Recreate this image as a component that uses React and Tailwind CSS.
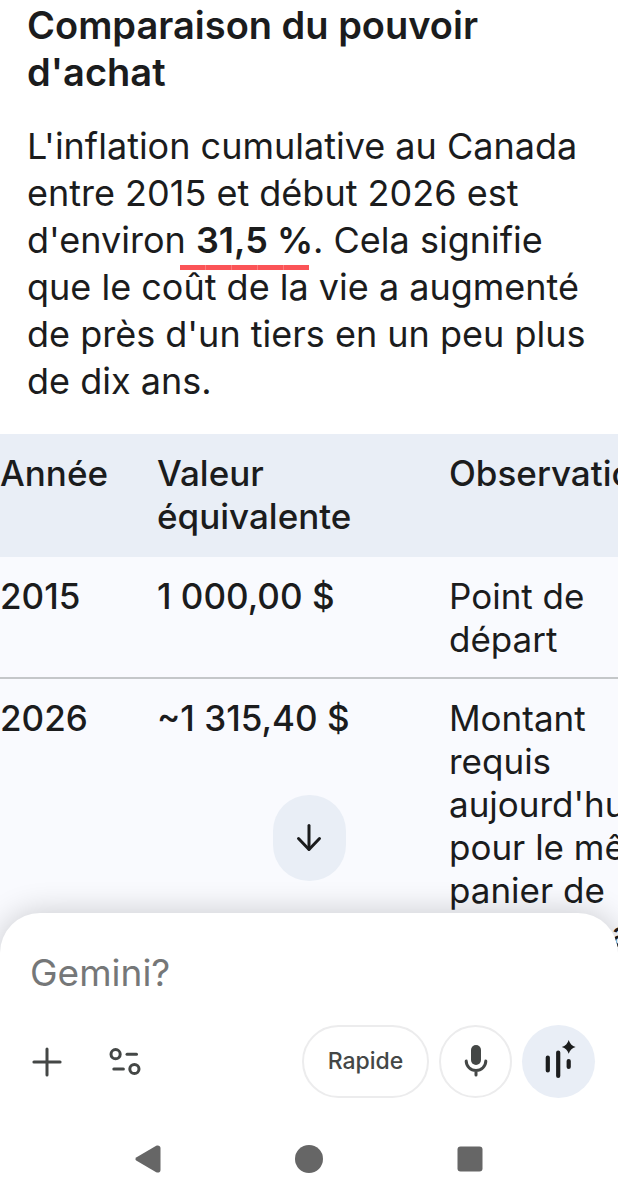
const ROWS = [
  { year: "2015", value: "1\u00a0000,00\u00a0$", note: "Point de départ" },
  {
    year: "2026",
    value: "~1\u00a0315,40\u00a0$",
    note: "Montant requis aujourd'hui pour le même panier de consommation.",
  },
];

export default function App() {
  return (
    <div className="relative h-screen overflow-hidden bg-white font-['Inter',sans-serif] text-[#1b1c1d]">
      <main>
        <Answer />
        <ValueTable />
      </main>

      <div className="absolute inset-x-0 bottom-0 flex flex-col items-center gap-8">
        <button
          aria-label="Aller en bas"
          className="flex h-[86px] w-[73px] items-center justify-center rounded-[36px] bg-[#e9eef6]"
        >
          <IconArrowDown />
        </button>
        <footer className="w-full rounded-t-[40px] bg-white shadow-[0_0_32px_rgba(0,0,0,0.2)]">
          <Composer />
          <SystemNav />
        </footer>
      </div>
    </div>
  );
}

function Answer() {
  return (
    <article className="px-[27px] pt-[2px] text-[36px] leading-[47px]">
      <h2 className="text-[38px] leading-[47px] font-semibold">
        Comparaison du pouvoir d'achat
      </h2>
      <p className="-mr-4 mt-[27px]">
        L'inflation cumulative au Canada
        <br />
        entre 2015 et début 2026 est
        <br />
        d'environ{" "}
        <strong className="relative font-semibold">
          31,5&nbsp;%
          <Underline />
        </strong>
        . Cela signifie
        <br />
        que le coût de la vie a augmenté
        <br />
        de près d'un tiers en un peu plus
        <br />
        de dix ans.
      </p>
    </article>
  );
}

function Underline() {
  return (
    <span className="absolute right-1 -bottom-2 -left-4 flex h-[5px] gap-px bg-[#fd7a7c]">
      {[0, 1, 2, 3, 4].map((i) => (
        <span key={i} className="flex-1 bg-[#fb5457]" />
      ))}
    </span>
  );
}

function ValueTable() {
  return (
    <table className="mt-[29px] w-[720px] table-fixed bg-[#f9fafe] text-left align-top text-[35px] leading-[43px]">
      <colgroup>
        <col className="w-[157px]" />
        <col className="w-[292px]" />
        <col />
      </colgroup>
      <thead className="bg-[#e9eef6]">
        <tr className="align-top">
          <th className="pt-[18px] pb-[19px] font-medium">Année</th>
          <th className="pt-[18px] pr-12 pb-[19px] font-medium">
            Valeur équivalente
          </th>
          <th className="pt-[18px] pb-[19px] font-medium">Observation</th>
        </tr>
      </thead>
      <tbody>
        {ROWS.map((row) => (
          <tr
            key={row.year}
            className="border-b-2 border-[#c4c7c9] align-top last:border-b-0"
          >
            <th className="pt-[18px] pb-4 font-medium">{row.year}</th>
            <td className="pt-[18px] pb-4 font-medium">{row.value}</td>
            <td className="pt-[18px] pr-9 pb-4">{row.note}</td>
          </tr>
        ))}
      </tbody>
    </table>
  );
}

function Composer() {
  return (
    <form className="pt-9">
      <input
        type="text"
        aria-label="Demander à Gemini"
        placeholder="Gemini?"
        className="block h-12 w-full px-[30px] text-[37px] outline-none placeholder:text-[#757778]"
      />
      <div className="flex items-center gap-[10px] pt-7 pr-[23px] pl-[28px] text-[#444746]">
        <button type="button" aria-label="Ajouter" className="p-1">
          <IconPlus />
        </button>
        <button type="button" aria-label="Outils" className="ml-7 p-1">
          <IconTune />
        </button>
        <button
          type="button"
          className="ml-auto h-[73px] w-[127px] rounded-full border-2 border-[#ececed] text-[23px] font-medium"
        >
          Rapide
        </button>
        <button
          type="button"
          aria-label="Micro"
          className="flex size-[73px] items-center justify-center rounded-full border-2 border-[#ececed]"
        >
          <IconMic />
        </button>
        <button
          type="button"
          aria-label="Gemini Live"
          className="flex size-[73px] items-center justify-center rounded-full bg-[#e9eef6] text-[#1b1c1d]"
        >
          <IconLive />
        </button>
      </div>
    </form>
  );
}

function SystemNav() {
  return (
    <nav className="flex justify-center gap-[121px] pt-[41px] pb-5 text-[#666]">
      <button aria-label="Retour" className="size-10">
        <svg viewBox="0 0 40 40" fill="currentColor" className="size-10">
          <path d="M8.6 18.2 28.2 6.8C30 5.8 32.5 6.6 32.5 9V31C32.5 33.4 30 34.2 28.2 33.2L8.6 21.8Q6.2 20 8.6 18.2Z" />
        </svg>
      </button>
      <button aria-label="Accueil" className="size-10">
        <svg viewBox="0 0 40 40" fill="currentColor" className="size-10">
          <circle cx="20" cy="20" r="14" />
        </svg>
      </button>
      <button aria-label="Applications récentes" className="size-10">
        <svg viewBox="0 0 40 40" fill="currentColor" className="size-10">
          <rect x="7.5" y="7.5" width="25" height="25" rx="3" />
        </svg>
      </button>
    </nav>
  );
}

function IconArrowDown() {
  return (
    <svg
      viewBox="0 0 30 30"
      fill="none"
      stroke="currentColor"
      strokeWidth={3}
      strokeLinecap="round"
      className="size-[30px]"
    >
      <path d="M15 2.5V26" />
      <path d="M4.5 15.5 15 26.5 25.5 15.5" strokeLinejoin="round" />
    </svg>
  );
}

function IconPlus() {
  return (
    <svg
      viewBox="0 0 30 30"
      stroke="currentColor"
      strokeWidth={3}
      strokeLinecap="round"
      className="size-[30px]"
    >
      <path d="M15 1.9V28.1M1.9 15H28.1" />
    </svg>
  );
}

function IconTune() {
  return (
    <svg
      viewBox="0 0 34 30"
      fill="none"
      stroke="currentColor"
      strokeWidth={3}
      strokeLinecap="round"
      className="h-[30px] w-[34px]"
    >
      <circle cx="7.6" cy="7.2" r="4.6" />
      <path d="M19 7.2H28.5" />
      <path d="M5.8 22H15.4" />
      <circle cx="26.4" cy="22" r="4.6" />
    </svg>
  );
}

function IconMic() {
  return (
    <svg viewBox="0 0 30 36" fill="none" className="h-9 w-[30px]">
      <rect x="10" y="1" width="10" height="20" rx="5" fill="currentColor" />
      <path
        d="M5.2 17A9.8 9.5 0 0 0 24.8 17M15 27V31"
        stroke="currentColor"
        strokeWidth={3}
        strokeLinecap="round"
      />
    </svg>
  );
}

function IconLive() {
  return (
    <svg viewBox="0 0 36 44" fill="none" className="h-11 w-9">
      <path
        d="M6.8 17.5V30.5M17.2 12.5V36M27.7 21V27"
        stroke="currentColor"
        strokeWidth={4.2}
        strokeLinecap="round"
      />
      <path
        d="M27.7 0Q29.2 5.4 34.6 6.9 29.2 8.4 27.7 13.8 26.2 8.4 20.8 6.9 26.2 5.4 27.7 0Z"
        fill="currentColor"
      />
    </svg>
  );
}
